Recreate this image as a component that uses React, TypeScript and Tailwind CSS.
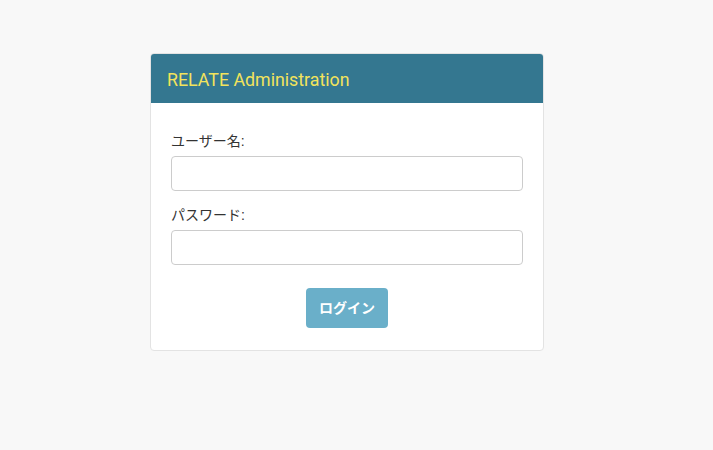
export default function App() {
  return (
    <div className="min-h-[450px] w-full bg-[#f8f8f8] pt-[53px]" style={{ fontFamily: '"Liberation Sans", "Noto Sans CJK JP", sans-serif' }}>
      <div className="ml-[150px] w-[394px] overflow-hidden rounded-[4px] border border-[#e3e3e3] bg-white">
        <div className="h-[49px] bg-[#347790] pl-[16px] pt-[16px]">
          <h1 className="text-[17.8px] font-normal leading-[20px] text-[#f2e35c]" style={{ fontFamily: 'Roboto, "Liberation Sans", sans-serif' }}>
            RELATE Administration
          </h1>
        </div>
        <div className="px-[20px] pb-[22px] pt-[28px]">
          <div className="mb-[14px]">
            <label className="mb-[5px] block text-[14px] leading-[20px] text-[#333]">ユーザー名:</label>
            <input type="text" className="block h-[35px] w-full rounded-[4px] border border-[#cccccc] bg-white px-3 outline-none" />
          </div>
          <div className="mb-[23px]">
            <label className="mb-[5px] block text-[14px] leading-[20px] text-[#333]">パスワード:</label>
            <input type="password" className="block h-[35px] w-full rounded-[4px] border border-[#cccccc] bg-white px-3 outline-none" />
          </div>
          <div className="flex justify-center">
            <button className="h-[40px] w-[82px] rounded-[4px] bg-[#6aafc9] text-[14px] font-bold text-white">
              ログイン
            </button>
          </div>
        </div>
      </div>
    </div>
  );
}
